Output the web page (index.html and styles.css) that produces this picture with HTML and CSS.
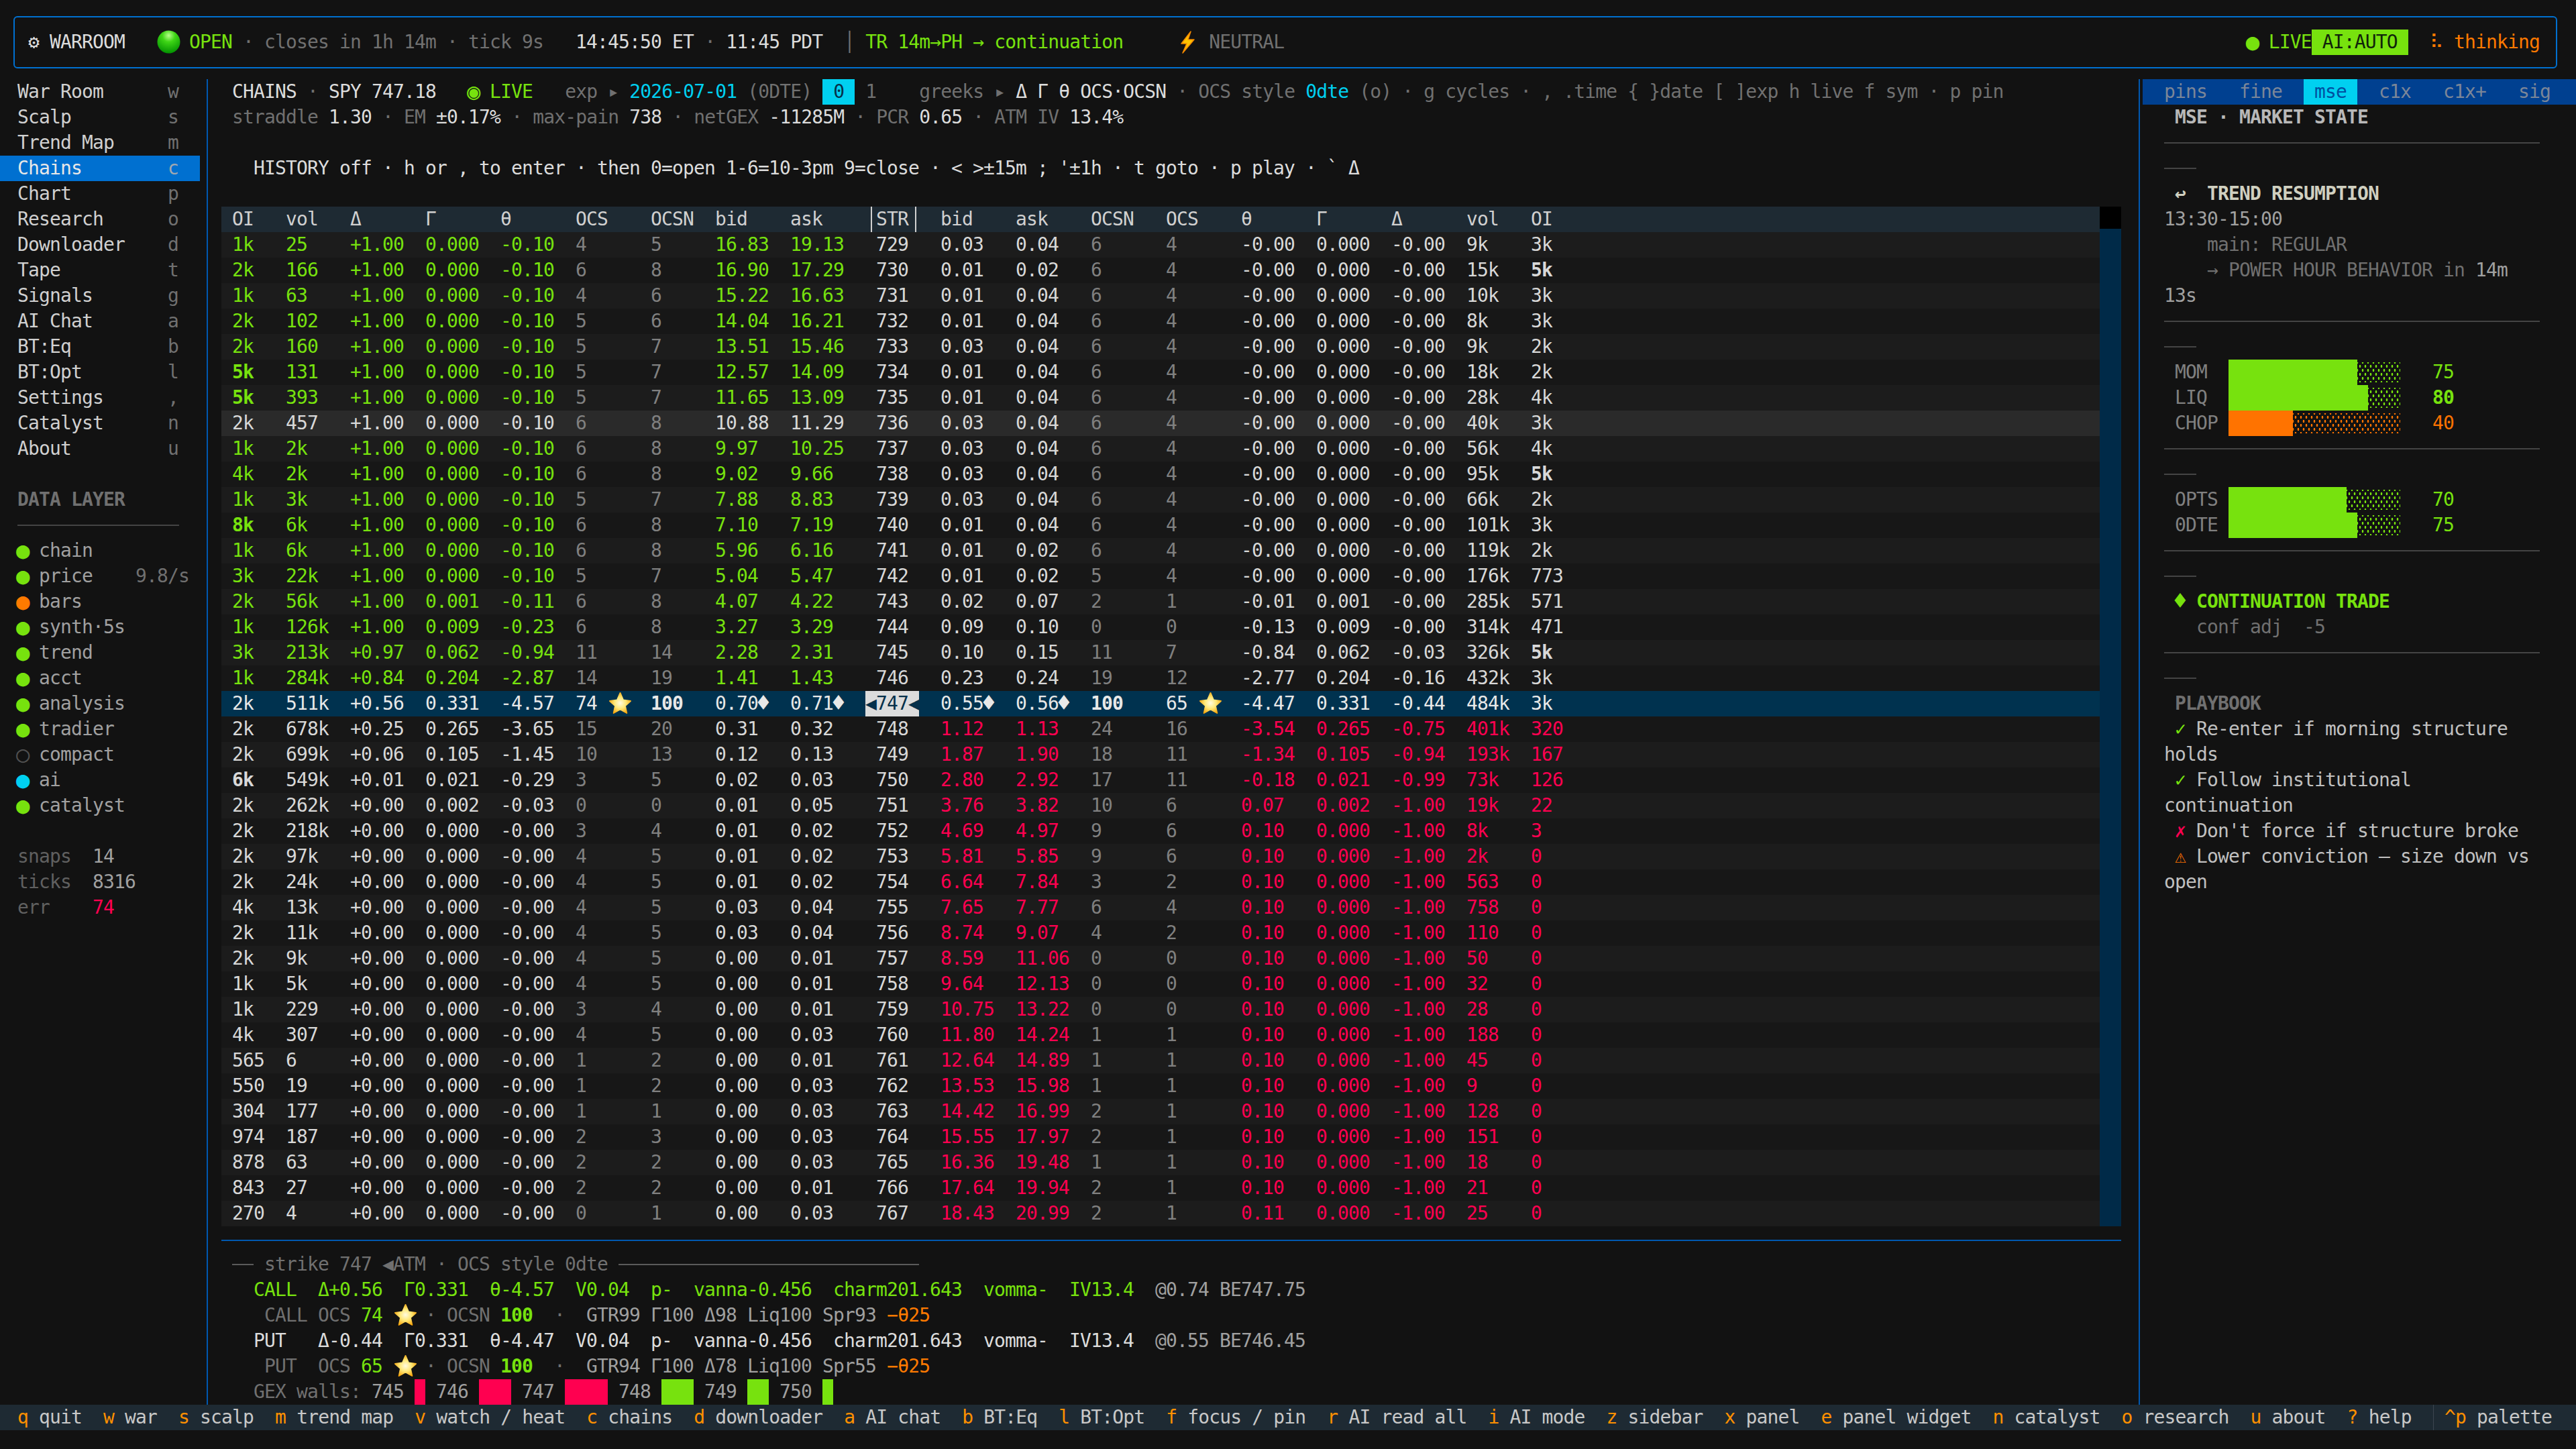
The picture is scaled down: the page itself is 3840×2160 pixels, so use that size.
FILE: index.html
```html
<!DOCTYPE html>
<html lang="en">
<head>
    <meta charset="UTF-8">
    <title>WARROOM</title>
    <link rel="stylesheet" href="styles.css">
</head>
<body>

<svg class="sprites" width="0" height="0">
    <defs>
        <radialGradient id="starFill" cx="50%" cy="50%" r="60%">
            <stop offset="0%" stop-color="#fffbe0"/>
            <stop offset="45%" stop-color="#ffe97a"/>
            <stop offset="100%" stop-color="#f59e00"/>
        </radialGradient>
        <symbol id="star" viewBox="0 0 36 34">
            <polygon points="18,2 22.6,12.6 33.5,14 25.4,21.3 27.8,32 18,26.4 8.2,32 10.6,21.3 2.5,14 13.4,12.6" fill="url(#starFill)" stroke="url(#starFill)" stroke-width="2" stroke-linejoin="round"/>
        </symbol>
    </defs>
</svg>

<!-- top bar -->
<header class="topbar">
    <div class="topbar-left"><span class="bright">⚙ WARROOM</span>   <svg class="open-dot" viewBox="0 0 36 36"><defs><radialGradient id="openFill" cx="50%" cy="22%" r="80%"><stop offset="0%" stop-color="#b6ff8a"/><stop offset="35%" stop-color="#3fd616"/><stop offset="100%" stop-color="#008f00"/></radialGradient></defs><circle cx="18" cy="18" r="17.5" fill="url(#openFill)"/></svg> <span class="green">OPEN</span> <span class="dim">· closes in 1h 14m · tick 9s</span>   <span class="bright">14:45:50 ET</span> <span class="dim">·</span> <span class="bright">11:45 PDT</span>  <span class="dim">│</span> <span class="green">TR 14m→PH → continuation</span>     <svg class="bolt" viewBox="0 0 26 34"><polygon points="18,1 4,19 12,19 6,33 23,13 14,13" fill="#ffc400" stroke="#f58a00" stroke-width="1.5" stroke-linejoin="round"/></svg> <span class="dim">NEUTRAL</span></div>
    <div class="topbar-right"><span class="green"><span class="dot">●</span> LIVE</span><span class="ai-mode"> AI:AUTO </span>  <span class="orange">⠧ thinking</span></div>
</header>

<div class="workspace">

    <!-- left nav -->
    <nav class="sidebar">
        <div class="nav-item"><span>War Room</span><span class="nav-key">w</span></div>
        <div class="nav-item"><span>Scalp</span><span class="nav-key">s</span></div>
        <div class="nav-item"><span>Trend Map</span><span class="nav-key">m</span></div>
        <div class="nav-item active"><span>Chains</span><span class="nav-key">c</span></div>
        <div class="nav-item"><span>Chart</span><span class="nav-key">p</span></div>
        <div class="nav-item"><span>Research</span><span class="nav-key">o</span></div>
        <div class="nav-item"><span>Downloader</span><span class="nav-key">d</span></div>
        <div class="nav-item"><span>Tape</span><span class="nav-key">t</span></div>
        <div class="nav-item"><span>Signals</span><span class="nav-key">g</span></div>
        <div class="nav-item"><span>AI Chat</span><span class="nav-key">a</span></div>
        <div class="nav-item"><span>BT:Eq</span><span class="nav-key">b</span></div>
        <div class="nav-item"><span>BT:Opt</span><span class="nav-key">l</span></div>
        <div class="nav-item"><span>Settings</span><span class="nav-key">,</span></div>
        <div class="nav-item"><span>Catalyst</span><span class="nav-key">n</span></div>
        <div class="nav-item"><span>About</span><span class="nav-key">u</span></div>

        <div class="layer-title">DATA LAYER</div>
        <div class="rule rule-nav"></div>
        <div class="layer"><span class="dot green">●</span> chain</div>
        <div class="layer layer-rate"><span><span class="dot green">●</span> price</span><span class="dim">9.8/s</span></div>
        <div class="layer"><span class="dot orange">●</span> bars</div>
        <div class="layer"><span class="dot green">●</span> synth·5s</div>
        <div class="layer"><span class="dot green">●</span> trend</div>
        <div class="layer"><span class="dot green">●</span> acct</div>
        <div class="layer"><span class="dot green">●</span> analysis</div>
        <div class="layer"><span class="dot green">●</span> tradier</div>
        <div class="layer"><span class="dot dim-off">○</span> compact</div>
        <div class="layer"><span class="dot cyan">●</span> ai</div>
        <div class="layer"><span class="dot green">●</span> catalyst</div>

        <div class="counts">
            <div class="layer"><span class="count-name">snaps</span>  14</div>
            <div class="layer"><span class="count-name">ticks</span>  8316</div>
            <div class="layer"><span class="count-name">err</span>    <span class="red">74</span></div>
        </div>
    </nav>

    <!-- chain table -->
    <main class="main">
        <div class="chain-head">
            <div><span class="bright">CHAINS</span> <span class="dim">·</span> <span class="bright">SPY 747.18</span>   <span class="green"><span class="dot">◉</span> LIVE</span>   <span class="dim">exp ▸</span> <span class="cyan">2026-07-01</span> <span class="dim">(0DTE)</span> <span class="exp-on"> 0 </span><span class="dim"> 1    greeks ▸</span> <span class="bright">Δ Γ θ OCS·OCSN</span> <span class="dim">· OCS style</span> <span class="cyan">0dte</span> <span class="dim">(o) · g cycles · , .time { }date [ ]exp h live f sym · p pin</span></div>
            <div><span class="dim">straddle</span> <span class="bright">1.30</span> <span class="dim">· EM</span> <span class="bright">±0.17%</span> <span class="dim">· max-pain</span> <span class="bright">738</span> <span class="dim">· netGEX</span> <span class="bright">-11285M</span> <span class="dim">· PCR</span> <span class="bright">0.65</span> <span class="dim">· ATM IV</span> <span class="bright">13.4%</span></div>
            <div class="blank"> </div>
            <div class="bright">  HISTORY off · h or , to enter · then 0=open 1-6=10-3pm 9=close · &lt; &gt;±15m ; '±1h · t goto · p play · ` Δ</div>
        </div>

        <div class="table-wrap">
            <div class="chain-table" id="chainTable"></div>
            <div class="scrollbar"><div class="scroll-top"></div></div>
        </div>

        <div class="detail">
            <div class="dim"><span class="line-lead"></span> strike 747 ◀ATM · OCS style 0dte <span class="line-tail"></span></div>
            <div class="green">  CALL  Δ+0.56  Γ0.331  θ-4.57  V0.04  p-  vanna-0.456  charm201.643  vomma-  IV13.4  <span class="mid">@0.74 BE747.75</span></div>
            <div class="dim">   CALL OCS <span class="green">74</span> <svg class="star"><use href="#star"/></svg> · OCSN <span class="green strong">100</span>  ·  <span class="mid">GTR99 Γ100 Δ98 Liq100 Spr93</span> <span class="orange">−θ25</span></div>
            <div class="bright">  PUT   Δ-0.44  Γ0.331  θ-4.47  V0.04  p-  vanna-0.456  charm201.643  vomma-  IV13.4  <span class="mid">@0.55 BE746.45</span></div>
            <div class="dim">   PUT  OCS <span class="green">65</span> <svg class="star"><use href="#star"/></svg> · OCSN <span class="green strong">100</span>  ·  <span class="mid">GTR94 Γ100 Δ78 Liq100 Spr55</span> <span class="orange">−θ25</span></div>
            <div class="mid">  <span class="dim">GEX walls:</span> 745 <span class="wall wall-put" style="width:16px"></span> 746 <span class="wall wall-put" style="width:48px"></span> 747 <span class="wall wall-put" style="width:64px"></span> 748 <span class="wall wall-call" style="width:48px"></span> 749 <span class="wall wall-call" style="width:32px"></span> 750 <span class="wall wall-call" style="width:16px"></span></div>
        </div>
    </main>

    <!-- right panel -->
    <aside class="panel">
        <div class="tabs">
            <span class="tab">pins</span>
            <span class="tab">fine</span>
            <span class="tab active">mse</span>
            <span class="tab">c1x</span>
            <span class="tab">c1x+</span>
            <span class="tab">sig</span>
        </div>
        <div class="panel-body">
            <div class="panel-title"> MSE · MARKET STATE</div>
            <div class="rule"></div>
            <div class="rule rule-short"></div>

            <div class="regime"> ↩  TREND RESUMPTION</div>
            <div class="mid">13:30-15:00</div>
            <div class="dim">    main: REGULAR</div>
            <div class="dim wrap">    → POWER HOUR BEHAVIOR in <span class="mid">14m 13s</span></div>
            <div class="rule"></div>
            <div class="rule rule-short"></div>

            <div class="meter"><span class="meter-label"> MOM</span><div class="meter-bar green"><div class="meter-fill" style="width:75%"></div><div class="meter-rest"></div></div><span class="green meter-num">75</span></div>
            <div class="meter"><span class="meter-label"> LIQ</span><div class="meter-bar green"><div class="meter-fill" style="width:81.25%"></div><div class="meter-rest"></div></div><span class="green meter-num strong">80</span></div>
            <div class="meter"><span class="meter-label"> CHOP</span><div class="meter-bar orange-bar"><div class="meter-fill" style="width:37.5%"></div><div class="meter-rest"></div></div><span class="orange-bar meter-num">40</span></div>
            <div class="rule"></div>
            <div class="rule rule-short"></div>

            <div class="meter"><span class="meter-label"> OPTS</span><div class="meter-bar green"><div class="meter-fill" style="width:68.75%"></div><div class="meter-rest"></div></div><span class="green meter-num">70</span></div>
            <div class="meter"><span class="meter-label"> 0DTE</span><div class="meter-bar green"><div class="meter-fill" style="width:75%"></div><div class="meter-rest"></div></div><span class="green meter-num">75</span></div>
            <div class="rule"></div>
            <div class="rule rule-short"></div>

            <div class="green strong"> <span class="diamond">♦</span> CONTINUATION TRADE</div>
            <div class="dim">   conf adj  -5</div>
            <div class="rule"></div>
            <div class="rule rule-short"></div>

            <div class="dim strong"> PLAYBOOK</div>
            <div class="play wrap"> <span class="green strong">✓</span> Re-enter if morning structure holds</div>
            <div class="play wrap"> <span class="green strong">✓</span> Follow institutional continuation</div>
            <div class="play wrap"> <span class="red strong">✗</span> Don't force if structure broke</div>
            <div class="play wrap"> <span class="orange-bar">⚠</span> Lower conviction — size down vs open</div>
        </div>
    </aside>
</div>

<!-- key hints -->
<footer class="statusbar">
    <div> <b>q</b> quit  <b>w</b> war  <b>s</b> scalp  <b>m</b> trend map  <b>v</b> watch / heat  <b>c</b> chains  <b>d</b> downloader  <b>a</b> AI chat  <b>b</b> BT:Eq  <b>l</b> BT:Opt  <b>f</b> focus / pin  <b>r</b> AI read all  <b>i</b> AI mode  <b>z</b> sidebar  <b>x</b> panel  <b>e</b> panel widget  <b>n</b> catalyst  <b>o</b> research  <b>u</b> about  <b>?</b> help</div>
    <div class="palette"><b>^p</b> palette</div>
</footer>

<script src="script.js"></script>
</body>
</html>
```

FILE: styles.css
```css
* {
    box-sizing: border-box;
}
body {
    margin: 0;
    width: 3840px;
    height: 2160px;
    overflow: hidden;
    background-color: #121212;
    color: #c8c8c8;
    font-family: "DejaVu Sans Mono", monospace;
    font-size: 28px;
    letter-spacing: -0.857px;
    line-height: 38px;
    padding-top: 24px;
}
.sprites {
    position: absolute;
}
/* terminal lines keep their spaces */
.topbar > div,
.nav-item span,
.layer-title,
.layer,
.chain-head > div,
.chain-row span,
.detail > div,
.tab,
.panel-body > div,
.statusbar > div {
    white-space: pre;
}
.panel-body > .wrap {
    white-space: pre-wrap;
    width: 570px;
}
.green { color: #77e20e; }
.red { color: #ff0050; }
.orange { color: #ff7a00; }
.orange-bar { color: #ff7300; }
.cyan { color: #00d0f0; }
.bright { color: #dcdcdc; }
.mid { color: #a0a0a0; }
.dim { color: #707070; }
.dim-off { color: #505050; }
.strong { font-weight: bold; }

/* bigger glyphs that still take one cell */
.dot,
.diamond {
    display: inline-block;
    width: 16px;
    height: 38px;
    font-size: 34px;
    line-height: 36px;
    text-align: center;
    letter-spacing: 0;
    text-indent: -2px;
    vertical-align: top;
    font-weight: normal;
}
.diamond {
    font-size: 36px;
    text-indent: -3px;
}

/* top bar */
.topbar {
    display: flex;
    justify-content: space-between;
    align-items: center;
    height: 78px;
    margin: 0 28px 16px 20px;
    padding: 0 24px 0 20px;
    border: 2px solid #0070d0;
    border-radius: 6px;
}
.open-dot {
    width: 35px;
    height: 35px;
    margin-right: -3px;
    vertical-align: -8px;
}
.bolt {
    width: 32px;
    height: 34px;
    vertical-align: -8px;
}
.ai-mode {
    display: inline-block;
    background-color: #77e20e;
    color: #10240a;
}

/* three columns */
.workspace {
    display: flex;
    height: 1976px;
}

/* left nav */
.sidebar {
    width: 310px;
    flex-shrink: 0;
    border-right: 2px solid #0058b0;
}
.nav-item {
    display: flex;
    justify-content: space-between;
    width: 298px;
    padding: 0 32px 0 26px;
    color: #d0d0d0;
}
.nav-key {
    color: #707070;
}
.nav-item.active {
    background-color: #0070d0;
    color: #e8e8e8;
}
.nav-item.active .nav-key {
    color: #a0a8b0;
}
.layer-title {
    margin-top: 38px;
    padding-left: 26px;
    color: #707070;
    font-weight: bold;
}
.layer {
    padding-left: 26px;
    color: #a0a0a0;
}
.layer-rate {
    display: flex;
    justify-content: space-between;
    width: 282px;
}
.counts {
    margin-top: 38px;
}
.count-name {
    color: #606060;
}

/* section rules */
.rule {
    display: flex;
    align-items: center;
    height: 38px;
}
.rule::before {
    content: "";
    width: 560px;
    height: 2px;
    background-color: #444;
}
.rule-short::before {
    width: 48px;
}
.rule-nav {
    margin-left: 26px;
}
.rule-nav::before {
    width: 241px;
}

/* main */
.main {
    display: flex;
    flex-direction: column;
    width: 2880px;
    flex-shrink: 0;
    padding: 0 26px 0 20px;
    border-right: 2px solid #0058b0;
}
.chain-head {
    padding-left: 16px;
    margin-bottom: 38px;
}
.exp-on {
    display: inline-block;
    background-color: #00d0f0;
    color: #06304a;
}
.table-wrap {
    display: flex;
}
.chain-table {
    flex: 1;
}
.scrollbar {
    width: 32px;
    background-color: #002a48;
}
.scroll-top {
    height: 33px;
    background-color: #000;
}
.chain-row {
    display: grid;
    grid-template-columns: 80px 96px 112px 112px 112px 112px 96px 112px 128px 96px 112px 112px 112px 112px 112px 112px 112px 96px 1fr;
    height: 38px;
    padding-left: 16px;
    background-color: #1c1c1c;
    color: #d8d8d8;
}
.chain-row.even {
    background-color: #171717;
}
.chain-row.header {
    background-color: #1e2a33;
    color: #d0d0d0;
}
.chain-row.cursor {
    background-color: #2a2a2a;
}
.chain-row.atm {
    background-color: #00324f;
    color: #e8e8e8;
}
.cell-green { color: #77e20e; }
.cell-red { color: #ff0050; }
.cell-ocs { color: #808080; }
.cell-big { font-weight: bold; }
.atm .cell-ocs {
    color: #e8e8e8;
}
.str-head {
    justify-self: start;
    margin-left: -8px;
    padding: 0 10px 0 6px;
    border-left: 2px solid #d0d0d0;
    border-right: 2px solid #d0d0d0;
}
.str-atm {
    justify-self: start;
    margin-left: -16px;
    background-color: #dcdcdc;
    color: #06304a;
}
.star {
    width: 37px;
    height: 34px;
    margin-right: -5px;
    vertical-align: -7px;
}

/* strike detail */
.detail {
    margin-top: 20px;
    padding-top: 16px;
    border-top: 2px solid #0058b0;
    padding-left: 16px;
}
.line-lead,
.line-tail {
    display: inline-block;
    width: 32px;
    height: 2px;
    background-color: #5a5a5a;
    vertical-align: 8px;
}
.line-tail {
    width: 448px;
}
.wall {
    display: inline-block;
    height: 38px;
    vertical-align: top;
}
.wall-put { background-color: #ff0050; }
.wall-call { background-color: #77e20e; }

/* right panel */
.panel {
    flex: 1;
    padding-left: 4px;
}
.tabs {
    display: flex;
    gap: 16px;
    padding-left: 16px;
    background-color: #004090;
}
.tab {
    padding: 0 16px;
    color: #7b8698;
}
.tab.active {
    background-color: #00d0f0;
    color: #0050a0;
}
.panel-body {
    padding-left: 32px;
}
.panel-title {
    color: #b8b8b8;
    font-weight: bold;
}
.regime {
    color: #d0d0c0;
    font-weight: bold;
}
.meter {
    display: flex;
    align-items: center;
    height: 38px;
}
.meter-label {
    width: 96px;
    color: #808080;
}
.meter-bar {
    display: flex;
    align-items: center;
    width: 256px;
    height: 38px;
}
.meter-bar.green { color: #77e20e; }
.meter-fill {
    height: 38px;
    background-color: currentColor;
}
.meter-rest {
    flex: 1;
    height: 30px;
    background-image: radial-gradient(currentColor 1.3px, transparent 1.6px), radial-gradient(currentColor 1.3px, transparent 1.6px);
    background-size: 8px 12px;
    background-position: 0 0, 4px 6px;
}
.meter-num {
    margin-left: 48px;
}
.play {
    color: #c0c0c0;
}

/* bottom bar */
.statusbar {
    display: flex;
    justify-content: space-between;
    align-items: stretch;
    height: 38px;
    padding-left: 10px;
    background-color: #1e2a33;
    color: #c8c8c8;
}
.statusbar b {
    color: #ff9000;
    font-weight: normal;
}
.palette {
    width: 213px;
    padding-left: 16px;
    border-left: 1px solid #3c4650;
}
```

FILE: script.js
```js
// OI vol delta gamma theta ocs ocsn bid ask strike bid ask ocsn ocs theta gamma delta vol OI
// a * after a score means it gets the star, ♦ marks the ATM quotes
const chainData = `
1k 25 +1.00 0.000 -0.10 4 5 16.83 19.13 729 0.03 0.04 6 4 -0.00 0.000 -0.00 9k 3k
2k 166 +1.00 0.000 -0.10 6 8 16.90 17.29 730 0.01 0.02 6 4 -0.00 0.000 -0.00 15k 5k
1k 63 +1.00 0.000 -0.10 4 6 15.22 16.63 731 0.01 0.04 6 4 -0.00 0.000 -0.00 10k 3k
2k 102 +1.00 0.000 -0.10 5 6 14.04 16.21 732 0.01 0.04 6 4 -0.00 0.000 -0.00 8k 3k
2k 160 +1.00 0.000 -0.10 5 7 13.51 15.46 733 0.03 0.04 6 4 -0.00 0.000 -0.00 9k 2k
5k 131 +1.00 0.000 -0.10 5 7 12.57 14.09 734 0.01 0.04 6 4 -0.00 0.000 -0.00 18k 2k
5k 393 +1.00 0.000 -0.10 5 7 11.65 13.09 735 0.01 0.04 6 4 -0.00 0.000 -0.00 28k 4k
2k 457 +1.00 0.000 -0.10 6 8 10.88 11.29 736 0.03 0.04 6 4 -0.00 0.000 -0.00 40k 3k
1k 2k +1.00 0.000 -0.10 6 8 9.97 10.25 737 0.03 0.04 6 4 -0.00 0.000 -0.00 56k 4k
4k 2k +1.00 0.000 -0.10 6 8 9.02 9.66 738 0.03 0.04 6 4 -0.00 0.000 -0.00 95k 5k
1k 3k +1.00 0.000 -0.10 5 7 7.88 8.83 739 0.03 0.04 6 4 -0.00 0.000 -0.00 66k 2k
8k 6k +1.00 0.000 -0.10 6 8 7.10 7.19 740 0.01 0.04 6 4 -0.00 0.000 -0.00 101k 3k
1k 6k +1.00 0.000 -0.10 6 8 5.96 6.16 741 0.01 0.02 6 4 -0.00 0.000 -0.00 119k 2k
3k 22k +1.00 0.000 -0.10 5 7 5.04 5.47 742 0.01 0.02 5 4 -0.00 0.000 -0.00 176k 773
2k 56k +1.00 0.001 -0.11 6 8 4.07 4.22 743 0.02 0.07 2 1 -0.01 0.001 -0.00 285k 571
1k 126k +1.00 0.009 -0.23 6 8 3.27 3.29 744 0.09 0.10 0 0 -0.13 0.009 -0.00 314k 471
3k 213k +0.97 0.062 -0.94 11 14 2.28 2.31 745 0.10 0.15 11 7 -0.84 0.062 -0.03 326k 5k
1k 284k +0.84 0.204 -2.87 14 19 1.41 1.43 746 0.23 0.24 19 12 -2.77 0.204 -0.16 432k 3k
2k 511k +0.56 0.331 -4.57 74* 100 0.70♦ 0.71♦ 747 0.55♦ 0.56♦ 100 65* -4.47 0.331 -0.44 484k 3k
2k 678k +0.25 0.265 -3.65 15 20 0.31 0.32 748 1.12 1.13 24 16 -3.54 0.265 -0.75 401k 320
2k 699k +0.06 0.105 -1.45 10 13 0.12 0.13 749 1.87 1.90 18 11 -1.34 0.105 -0.94 193k 167
6k 549k +0.01 0.021 -0.29 3 5 0.02 0.03 750 2.80 2.92 17 11 -0.18 0.021 -0.99 73k 126
2k 262k +0.00 0.002 -0.03 0 0 0.01 0.05 751 3.76 3.82 10 6 0.07 0.002 -1.00 19k 22
2k 218k +0.00 0.000 -0.00 3 4 0.01 0.02 752 4.69 4.97 9 6 0.10 0.000 -1.00 8k 3
2k 97k +0.00 0.000 -0.00 4 5 0.01 0.02 753 5.81 5.85 9 6 0.10 0.000 -1.00 2k 0
2k 24k +0.00 0.000 -0.00 4 5 0.01 0.02 754 6.64 7.84 3 2 0.10 0.000 -1.00 563 0
4k 13k +0.00 0.000 -0.00 4 5 0.03 0.04 755 7.65 7.77 6 4 0.10 0.000 -1.00 758 0
2k 11k +0.00 0.000 -0.00 4 5 0.03 0.04 756 8.74 9.07 4 2 0.10 0.000 -1.00 110 0
2k 9k +0.00 0.000 -0.00 4 5 0.00 0.01 757 8.59 11.06 0 0 0.10 0.000 -1.00 50 0
1k 5k +0.00 0.000 -0.00 4 5 0.00 0.01 758 9.64 12.13 0 0 0.10 0.000 -1.00 32 0
1k 229 +0.00 0.000 -0.00 3 4 0.00 0.01 759 10.75 13.22 0 0 0.10 0.000 -1.00 28 0
4k 307 +0.00 0.000 -0.00 4 5 0.00 0.03 760 11.80 14.24 1 1 0.10 0.000 -1.00 188 0
565 6 +0.00 0.000 -0.00 1 2 0.00 0.01 761 12.64 14.89 1 1 0.10 0.000 -1.00 45 0
550 19 +0.00 0.000 -0.00 1 2 0.00 0.03 762 13.53 15.98 1 1 0.10 0.000 -1.00 9 0
304 177 +0.00 0.000 -0.00 1 1 0.00 0.03 763 14.42 16.99 2 1 0.10 0.000 -1.00 128 0
974 187 +0.00 0.000 -0.00 2 3 0.00 0.03 764 15.55 17.97 2 1 0.10 0.000 -1.00 151 0
878 63 +0.00 0.000 -0.00 2 2 0.00 0.03 765 16.36 19.48 1 1 0.10 0.000 -1.00 18 0
843 27 +0.00 0.000 -0.00 2 2 0.00 0.01 766 17.64 19.94 2 1 0.10 0.000 -1.00 21 0
270 4 +0.00 0.000 -0.00 0 1 0.00 0.03 767 18.43 20.99 2 1 0.11 0.000 -1.00 25 0
`.trim().split('\n').map((line) => line.split(' '));

const headerCols = ['OI', 'vol', 'Δ', 'Γ', 'θ', 'OCS', 'OCSN', 'bid', 'ask', 'STR', 'bid', 'ask', 'OCSN', 'OCS', 'θ', 'Γ', 'Δ', 'vol', 'OI'];
const STAR = '<svg class="star"><use href="#star"/></svg>';
const ATM = 747;
const CURSOR = 736;

function cellClass(col, strike) {
    if (col === 5 || col === 6 || col === 12 || col === 13) return 'cell-ocs';
    if (strike === ATM || strike === CURSOR || col === 9) return '';
    if (col < 9 && strike < ATM) return 'cell-green';
    if (col > 9 && strike > ATM) return 'cell-red';
    return '';
}

function isBig(col, value) {
    return value === '100' || ((col === 0 || col === 18) && /^[5-9]k$/.test(value));
}

function cellText(value) {
    return value.replace('*', ' ' + STAR).replace('♦', '<span class="diamond">♦</span>');
}

function renderTable() {
    const table = document.getElementById('chainTable');
    let html = '<div class="chain-row header">' + headerCols.map((name) => {
        return name === 'STR' ? '<span class="str-head">STR</span>' : `<span>${name}</span>`;
    }).join('') + '</div>';

    chainData.forEach((cells, index) => {
        const strike = Number(cells[9]);
        const classes = ['chain-row'];
        if (index % 2) classes.push('even');
        if (strike === CURSOR) classes.push('cursor');
        if (strike === ATM) classes.push('atm');

        html += `<div class="${classes.join(' ')}">`;
        cells.forEach((value, col) => {
            if (col === 9 && strike === ATM) {
                html += `<span class="str-atm">◀${value}◀</span>`;
                return;
            }
            let cls = cellClass(col, strike);
            if (isBig(col, value)) cls += ' cell-big';
            html += `<span class="${cls}">${cellText(value)}</span>`;
        });
        html += '</div>';
    });
    table.innerHTML = html;
}

renderTable();
```
